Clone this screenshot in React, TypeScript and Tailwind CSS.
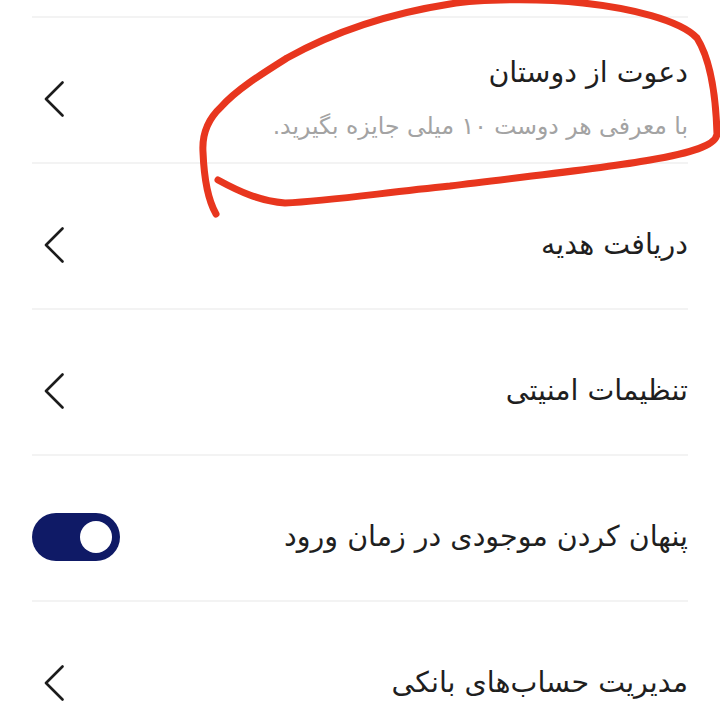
import React from "react";

const Chevron = () => (
  <svg width="20" height="36" viewBox="0 0 20 36" className="ml-[12px] shrink-0" fill="none">
    <path d="M18.5 1.5 L2 18 L18.5 34.5" stroke="#1c1c1c" strokeWidth="2.6" strokeLinecap="round" strokeLinejoin="round" />
  </svg>
);

const Row = ({ children, end }: { children: React.ReactNode; end: React.ReactNode }) => (
  <div className="h-[146px] border-t-2 border-[#f3f3f3] flex items-center justify-between pt-[18px]">
    {children}
    {end}
  </div>
);

const titleCls = "text-[28.5px] leading-[40px] text-[#1f1f1f] whitespace-nowrap";

export default function App() {
  return (
    <div
      dir="rtl"
      className="relative w-[720px] h-[708px] overflow-hidden bg-white"
      style={{ fontFamily: '"DejaVu Sans", "Noto Sans", sans-serif' }}
    >
      <div className="h-[16px]" />
      <div className="mx-8">
        <Row end={<Chevron />}>
          <div className="flex flex-col">
            <div className={titleCls}>دعوت از دوستان</div>
            <div className="mt-[14px] text-[23.5px] leading-[38px] text-[#a3a3a3] whitespace-nowrap">
              با معرفی هر دوست ۱۰ میلی جایزه بگیرید.
            </div>
          </div>
        </Row>
        <Row end={<Chevron />}>
          <div className={titleCls}>دریافت هدیه</div>
        </Row>
        <Row end={<Chevron />}>
          <div className={titleCls}>تنظیمات امنیتی</div>
        </Row>
        <Row
          end={
            <div className="w-[88px] h-[48px] rounded-full bg-[#0f1a66] flex items-center justify-end p-2" dir="ltr">
              <div className="w-[32px] h-[32px] rounded-full bg-white" />
            </div>
          }
        >
          <div className={titleCls}>پنهان کردن موجودی در زمان ورود</div>
        </Row>
        <Row end={<Chevron />}>
          <div className={titleCls}>مدیریت حساب‌های بانکی</div>
        </Row>
      </div>

      <svg
        className="absolute left-0 top-0 pointer-events-none"
        width="720"
        height="708"
        viewBox="0 0 720 708"
        fill="none"
      >
        <path
          d="M218 180 C240 192 260 201 285 203 C330 201 380 193 450 186 C520 177 600 169 650 160 C690 153 716 146 717 134 C716 100 712 62 697 38 C680 20 630 8 583 3 C540 -2 480 -1 450 4 C380 15 330 34 287 58 C260 75 236 90 221 107 C206 121 202 136 203 152 C204 177 208 200 216 214"
          stroke="#e8361e"
          strokeWidth="7"
          strokeLinecap="round"
          strokeLinejoin="round"
        />
      </svg>
    </div>
  );
}
